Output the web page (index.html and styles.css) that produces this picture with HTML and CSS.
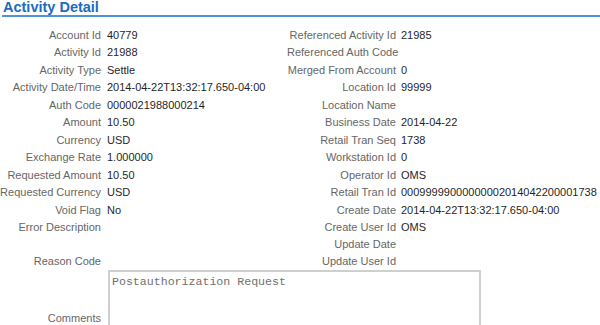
FILE: index.html
```html
<!DOCTYPE html>
<html lang="en">
<head>
    <meta charset="UTF-8">
    <title>Activity Detail</title>
    <link rel="stylesheet" href="styles.css">
</head>
<body>
  <div class="page">
    <h1 class="title">Activity Detail</h1>

    <div class="detail">
        <div class="lbl">Account Id</div><div class="val">40779</div>
        <div class="lbl lbl2">Referenced Activity Id</div><div class="val">21985</div>

        <div class="lbl">Activity Id</div><div class="val">21988</div>
        <div class="lbl lbl2">Referenced Auth Code</div><div class="val"></div>

        <div class="lbl">Activity Type</div><div class="val">Settle</div>
        <div class="lbl lbl2">Merged From Account</div><div class="val">0</div>

        <div class="lbl">Activity Date/Time</div><div class="val">2014-04-22T13:32:17.650-04:00</div>
        <div class="lbl lbl2">Location Id</div><div class="val">99999</div>

        <div class="lbl">Auth Code</div><div class="val">0000021988000214</div>
        <div class="lbl lbl2">Location Name</div><div class="val"></div>

        <div class="lbl">Amount</div><div class="val">10.50</div>
        <div class="lbl lbl2">Business Date</div><div class="val">2014-04-22</div>

        <div class="lbl">Currency</div><div class="val">USD</div>
        <div class="lbl lbl2">Retail Tran Seq</div><div class="val">1738</div>

        <div class="lbl">Exchange Rate</div><div class="val">1.000000</div>
        <div class="lbl lbl2">Workstation Id</div><div class="val">0</div>

        <div class="lbl">Requested Amount</div><div class="val">10.50</div>
        <div class="lbl lbl2">Operator Id</div><div class="val">OMS</div>

        <div class="lbl">Requested Currency</div><div class="val">USD</div>
        <div class="lbl lbl2">Retail Tran Id</div><div class="val">00099999000000002014042200001738</div>

        <div class="lbl">Void Flag</div><div class="val">No</div>
        <div class="lbl lbl2">Create Date</div><div class="val">2014-04-22T13:32:17.650-04:00</div>

        <div class="lbl">Error Description</div><div class="val"></div>
        <div class="lbl lbl2">Create User Id</div><div class="val">OMS</div>

        <div class="lbl"></div><div class="val"></div>
        <div class="lbl lbl2">Update Date</div><div class="val"></div>

        <div class="lbl">Reason Code</div><div class="val"></div>
        <div class="lbl lbl2">Update User Id</div><div class="val"></div>

        <div class="lbl comments-lbl">Comments</div>
        <textarea class="comments" readonly>Postauthorization Request</textarea>
    </div>
  </div>
</body>
</html>
```

FILE: styles.css
```css
body {
    margin: 0;
    font-family: "Liberation Sans", Arial, sans-serif;
    font-size: 11px;
    background: #fff;
}
.page {
    height: 325px;
    overflow: hidden;
}
.title {
    margin: 0 0 0 2px;
    padding-left: 1px;
    font-size: 14.5px;
    line-height: 15px;
    font-weight: bold;
    color: #1b6cc0;
    border-bottom: 2px solid #4f93d8;
}
.detail {
    display: grid;
    grid-template-columns: 107px 180px 114px 1fr;
    grid-template-rows: repeat(12, 17.5px) repeat(2, 16.5px) auto;
    margin-top: 9px;
}
.lbl {
    text-align: right;
    padding-right: 6px;
    color: #666;
    white-space: nowrap;
    align-self: center;
}
.lbl2 {
    padding-right: 5px;
}
.val {
    color: #1f1f2a;
    white-space: nowrap;
    align-self: center;
}
.comments-lbl {
    align-self: center;
}
.comments {
    grid-column: 2 / 5;
    width: 373px;
    height: 96px;
    margin: 1px 0 0 1px;
    padding: 3px 2px;
    box-sizing: border-box;
    border: 2px solid #cfcfcf;
    font-family: "Liberation Mono", "Courier New", monospace;
    font-size: 11.6px;
    line-height: 13px;
    color: #707070;
    resize: none;
    overflow: hidden;
    outline: none;
}
```
